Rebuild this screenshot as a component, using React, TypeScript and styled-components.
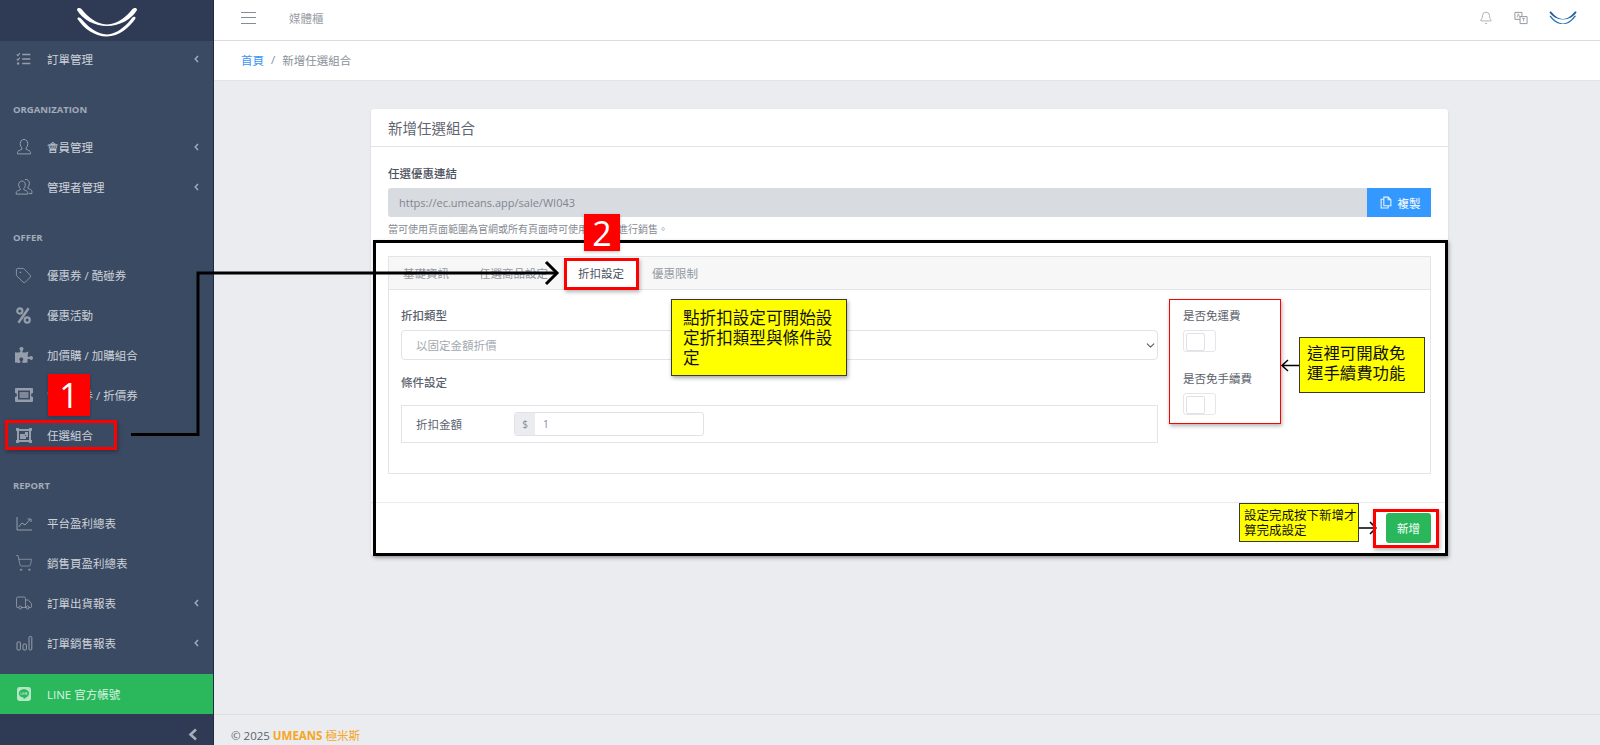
import React from "react";
import styled, { createGlobalStyle } from "styled-components";
import { ChevronDown, Bell, ShoppingCart, Truck, Tag } from "lucide-react";
import { FaPuzzlePiece, FaLine } from "react-icons/fa";

const FONT = `"Open Sans", "Noto Sans CJK TC", sans-serif`;

const Global = createGlobalStyle`
  * { box-sizing: border-box; }
  html, body { margin: 0; padding: 0; height: 745px; overflow: hidden; background: #ebecef; }
  body { font-family: ${FONT}; font-size: 11.5px; color: #4e5561; }
`;

const Page = styled.div`
  position: relative;
  display: flex;
  width: 1600px;
  height: 745px;
  overflow: hidden;
`;

const Sidebar = styled.aside`
  width: 214px;
  flex: none;
  display: flex;
  flex-direction: column;
  background: #3a4a63;
  border-right: 1px solid #1f2a44;
`;

const LogoBar = styled.div`
  height: 41px;
  flex: none;
  display: flex;
  justify-content: center;
  padding-top: 3px;
  background: #2f3a54;
`;

const Nav = styled.nav`
  flex: 1;
  display: flex;
  flex-direction: column;
`;

const SectionTitle = styled.div`
  height: 48px;
  padding: 23px 0 0 13px;
  font-size: 9.5px;
  line-height: 12px;
  font-weight: 700;
  color: #a3abb8;
`;

const NavRow = styled.div`
  height: 40px;
  flex: none;
  display: flex;
  align-items: center;
  padding-bottom: 4px;
  color: #ced2d9;
`;

const NavIcon = styled.span`
  width: 47px;
  flex: none;
  display: flex;
  justify-content: center;
  color: #969eab;
  svg { display: block; }
`;

const NavText = styled.span`
  flex: 1;
  white-space: nowrap;
`;

const Caret = styled.span`
  width: 19px;
  flex: none;
  display: flex;
  svg { display: block; }
`;

const LineRow = styled(NavRow)`
  background: #2bb85c;
  color: #d9f3e2;
  padding-bottom: 0;
`;

const LineIcon = styled(NavIcon)`
  color: #b4e8c5;
`;

const Collapse = styled.div`
  height: 31px;
  flex: none;
  background: #2f3a54;
  display: flex;
  align-items: center;
  justify-content: flex-end;
  padding: 10px 15px 0 0;
  color: #a8aeb9;
`;

const Main = styled.main`
  flex: 1;
  min-width: 0;
  display: flex;
  flex-direction: column;
`;

const TopBar = styled.header`
  height: 41px;
  flex: none;
  background: #fff;
  border-bottom: 1px solid #d8dbe0;
  display: flex;
  align-items: center;
  padding: 0 23px 5px 27px;
`;

const Burger = styled.span`
  width: 15px;
  height: 12px;
  flex: none;
  border-top: 1px solid #868c96;
  border-bottom: 1px solid #868c96;
  position: relative;
  &::after {
    content: "";
    position: absolute;
    left: 0;
    right: 0;
    top: 4px;
    height: 1px;
    background: #868c96;
  }
`;

const TopTitle = styled.span`
  margin-left: 33px;
  color: #9a9ea6;
  flex: 1;
`;

const TopIcons = styled.div`
  display: flex;
  align-items: center;
  gap: 21px;
  color: #8d929b;
  svg { display: block; }
`;

const Crumbs = styled.div`
  height: 40px;
  flex: none;
  background: #fff;
  border-bottom: 1px solid #e2e4e8;
  display: flex;
  align-items: center;
  padding: 0 0 2px 27px;
  color: #8c9199;
  gap: 7px;
`;

const CrumbLink = styled.a`
  color: #3a94f5;
`;

const Content = styled.div`
  flex: 1;
  min-height: 0;
  padding: 28px 152px 0 157px;
`;

const Card = styled.section`
  background: #fff;
  border-radius: 3px;
  box-shadow: 0 1px 2px rgba(60, 70, 90, 0.15);
  height: 447px;
  display: flex;
  flex-direction: column;
`;

const CardHead = styled.div`
  height: 38px;
  flex: none;
  border-bottom: 1px solid #e2e4e8;
  display: flex;
  align-items: center;
  padding-left: 17px;
  font-size: 14.5px;
  color: #5f6570;
`;

const CardBody = styled.div`
  flex: 1;
  padding: 19px 17px 0;
  border-bottom: 1px solid #e9ebee;
`;

const FieldLabel = styled.div`
  font-weight: 500;
  line-height: 16px;
  color: #4c525e;
`;

const LinkRow = styled.div`
  display: flex;
  height: 29px;
  margin-top: 6px;
`;

const LinkInput = styled.div`
  flex: 1;
  background: #d8dbe0;
  border-radius: 3px 0 0 3px;
  color: #80868f;
  font-size: 11px;
  padding-left: 11px;
  display: flex;
  align-items: center;
`;

const CopyButton = styled.div`
  width: 64px;
  flex: none;
  background: #3399ff;
  color: #e9f3ff;
  display: flex;
  align-items: center;
  justify-content: center;
  gap: 6px;
  padding-left: 2px;
  font-weight: 500;
  svg { display: block; }
`;

const Hint = styled.div`
  margin-top: 4px;
  font-size: 10px;
  line-height: 16px;
  color: #868b93;
`;

const Tabs = styled.div`
  margin-top: 19px;
  height: 218px;
  border: 1px solid #e2e4e8;
`;

const TabBar = styled.div`
  height: 33px;
  background: #f7f7f8;
  border-bottom: 1px solid #e2e4e8;
  display: flex;
  gap: 2px;
`;

const Tab = styled.div<{ $active?: boolean }>`
  padding: 0 14px;
  display: flex;
  align-items: center;
  white-space: nowrap;
  color: ${(p) => (p.$active ? "#4c525e" : "#9499a1")};
  background: ${(p) => (p.$active ? "#fff" : "transparent")};
  &:last-child { margin-left: -2px; }
`;

const Pane = styled.div`
  display: grid;
  grid-template-columns: 757px 1fr;
  column-gap: 25px;
  padding: 18px 12px 0;
`;

const PaneLabel = styled.div`
  font-weight: 500;
  line-height: 16px;
  color: #5c626d;
`;

const SelectBox = styled.div`
  height: 30px;
  margin-top: 6px;
  border: 1px solid #e0e3e8;
  border-radius: 4px;
  display: flex;
  align-items: center;
  justify-content: space-between;
  padding: 0 0 0 14px;
  color: #a4a9b0;
  svg { display: block; color: #555d6b; }
`;

const CondLabel = styled(PaneLabel)`
  margin-top: 15px;
`;

const CondBox = styled.div`
  height: 38px;
  margin-top: 14px;
  border: 1px solid #e2e4e8;
  display: flex;
  align-items: center;
  padding-left: 14px;
  color: #5c626d;
`;

const CondName = styled.span`
  width: 98px;
  flex: none;
`;

const InputGroup = styled.div`
  width: 190px;
  height: 24px;
  display: flex;
  border: 1px solid #dfe2e7;
  border-radius: 3px;
  overflow: hidden;
`;

const Addon = styled.span`
  width: 20px;
  flex: none;
  background: #ebecef;
  color: #868b93;
  display: flex;
  align-items: center;
  justify-content: center;
  font-size: 10px;
`;

const InputValue = styled.span`
  padding-left: 8px;
  display: flex;
  align-items: center;
  color: #7b8ba3;
  font-size: 10px;
`;

const SwitchCol = styled.div`
  display: flex;
  flex-direction: column;
`;

const SwitchLabel = styled(PaneLabel)`
  font-weight: 400;
`;

const Switch = styled.div`
  width: 33px;
  height: 22px;
  margin: 6px 0 19px;
  padding: 2px;
  border: 1px solid #e4e6ea;
  border-radius: 3px;
  background: #fff;
  &::before {
    content: "";
    display: block;
    width: 17px;
    height: 16px;
    border: 1px solid #dfe2e7;
    border-radius: 2px;
  }
`;

const CardFoot = styled.div`
  height: 53px;
  flex: none;
  display: flex;
  justify-content: flex-end;
  padding: 10px 17px 0 0;
`;

const SaveButton = styled.div`
  width: 45px;
  height: 30px;
  background: #2ab75b;
  border-radius: 3px;
  color: #dff5e6;
  font-weight: 500;
  display: flex;
  align-items: center;
  justify-content: center;
`;

const Footer = styled.footer`
  flex: none;
  height: 31px;
  border-top: 1px solid #dddfe3;
  padding: 13px 0 0 17px;
  line-height: 16px;
  color: #5d636d;
  font-size: 11.5px;
`;

const Brand = styled.b`
  color: #f5a623;
  font-weight: 700;
`;

const BrandCn = styled.span`
  color: #f5a623;
`;

/* annotation layer: items placed on the screenshot as markup */
const Overlay = styled.svg`
  position: absolute;
  left: 0;
  top: 0;
  width: 1600px;
  height: 745px;
  pointer-events: none;
`;

const Frame = styled.div<{ $x: number; $y: number; $w: number; $h: number; $b: number; $c: string }>`
  position: absolute;
  left: ${(p) => p.$x}px;
  top: ${(p) => p.$y}px;
  width: ${(p) => p.$w}px;
  height: ${(p) => p.$h}px;
  border: ${(p) => p.$b}px solid ${(p) => p.$c};
  box-shadow: 1px 2px 4px rgba(0, 0, 0, 0.3);
`;

const Badge = styled.div<{ $x: number; $y: number; $w: number; $h: number }>`
  position: absolute;
  left: ${(p) => p.$x}px;
  top: ${(p) => p.$y}px;
  width: ${(p) => p.$w}px;
  height: ${(p) => p.$h}px;
  background: #f00;
  color: #fff;
  font-family: "Open Sans", "Liberation Sans", sans-serif;
  font-size: 34px;
  display: flex;
  align-items: center;
  justify-content: center;
  box-shadow: 0 1px 3px rgba(0, 0, 0, 0.25);
`;

const Note = styled.div<{ $x: number; $y: number; $w: number; $h: number; $size: number; $lh: number; $pad: string; $b: number; $shadow?: boolean }>`
  position: absolute;
  left: ${(p) => p.$x}px;
  top: ${(p) => p.$y}px;
  width: ${(p) => p.$w}px;
  height: ${(p) => p.$h}px;
  padding: ${(p) => p.$pad};
  background: #ffff00;
  border: ${(p) => p.$b}px solid #3a3a2a;
  color: #111;
  font-size: ${(p) => p.$size}px;
  line-height: ${(p) => p.$lh}px;
  box-shadow: ${(p) => (p.$shadow ? "1px 2px 4px rgba(0,0,0,0.35)" : "none")};
`;

const Chev = () => (
  <svg width="5" height="8" viewBox="0 0 5 8" fill="none" stroke="#a6adb9" strokeWidth="1.4">
    <path d="M4 1 1.2 4 4 7" />
  </svg>
);

const Line = ({ children, w = 20 }: { children: React.ReactNode; w?: number }) => (
  <svg width={w} height="20" viewBox="0 0 20 20" fill="none" stroke="currentColor" strokeWidth="1">
    {children}
  </svg>
);

const Logo = ({ w, color, color2 }: { w: number; color: string; color2: string }) => (
  <svg width={w} viewBox="0 0 62 30">
    <path d="M1 3C1 .5 4 .5 5.5 2 12 10 20 17 31 17.5 42 17 50 10 56.5 2 58 .5 61 .5 61 3 56 12 44 19 31 19 18 19 6 12 1 3Z" fill={color} />
    <path d="M1.5 12C1 10 3.5 10 5 11.5 12 20 21 27 31 27.5 41 27 50 19 56 11 57.5 9 60 9.5 59.5 11.5 53 21 43 29.5 31 29.5 19 29.5 8 22 1.5 12Z" fill={color2} />
  </svg>
);

const items: Array<{ title?: string; rows: Array<{ t: string; c?: boolean; i: React.ReactNode }> }> = [
  {
    rows: [
      {
        t: "訂單管理",
        c: true,
        i: (
          <Line w={18}>
            <path d="M8 5h9M8 10h9M8 15h9" strokeWidth="1.6" />
            <path d="M2 5l1.2 1.2L5.4 3.6M2 10l1.2 1.2 2.2-2.6" strokeWidth="1.3" />
            <circle cx="3.4" cy="15" r="1.3" fill="currentColor" stroke="none" />
          </Line>
        ),
      },
    ],
  },
  {
    title: "ORGANIZATION",
    rows: [
      {
        t: "會員管理",
        c: true,
        i: (
          <Line>
            <path d="M10 2.5c-2.4 0-3.8 1.8-3.8 4.2 0 1.7.7 3.3 1.7 4.2v1.4c-2 .8-4.4 1.6-4.4 3.2v1.4h13v-1.4c0-1.6-2.4-2.4-4.4-3.2v-1.4c1-.9 1.7-2.5 1.7-4.2 0-2.4-1.4-4.2-3.8-4.2z" />
          </Line>
        ),
      },
      {
        t: "管理者管理",
        c: true,
        i: (
          <Line>
            <path d="M8 4c-2 0-3.3 1.6-3.3 3.8 0 1.5.6 2.9 1.5 3.7v1.3c-1.8.7-4 1.4-4 2.9v1.4h11.6v-1.4c0-1.5-2.2-2.2-4-2.9v-1.3c.9-.8 1.5-2.2 1.5-3.7C11.3 5.6 10 4 8 4z" />
            <path d="M11 2.6c2.4-.6 4.4 1 4.4 3.8 0 1.5-.6 2.9-1.5 3.7v1.3c1.8.7 4 1.4 4 2.9v2.3h-3" />
          </Line>
        ),
      },
    ],
  },
  {
    title: "OFFER",
    rows: [
      { t: "優惠券 / 酷碰券", i: <Tag size={17} strokeWidth={1.2} /> },
      {
        t: "優惠活動",
        i: (
          <svg width="15" height="17" viewBox="0 0 15 17" fill="none" stroke="currentColor" strokeWidth="2.1">
            <circle cx="3.8" cy="4" r="2.6" />
            <circle cx="11.2" cy="13" r="2.6" />
            <path d="M12.6 1.2 2.4 15.8" strokeWidth="2.4" />
          </svg>
        ),
      },
      { t: "加價購 / 加購組合", i: <FaPuzzlePiece size={18} /> },
      {
        t: "電子禮券 / 折價券",
        i: (
          <svg width="18" height="14" viewBox="0 0 18 14" fill="currentColor">
            <path fillRule="evenodd" d="M1 0h16a1 1 0 0 1 1 1v4a2 2 0 0 0 0 4v4a1 1 0 0 1-1 1H1a1 1 0 0 1-1-1V9a2 2 0 0 0 0-4V1a1 1 0 0 1 1-1zm2 2.5v9h12v-9z" />
            <path d="M4.5 4h9v6h-9z" opacity=".75" />
          </svg>
        ),
      },
      {
        t: "任選組合",
        i: (
          <svg width="16" height="15" viewBox="0 0 16 15" fill="currentColor">
            <path fillRule="evenodd" d="M0 0h3v1h10V0h3v3h-1v9h1v3h-3v-1H3v1H0v-3h1V3H0zm3 3v9h10V3z" />
            <path fillRule="evenodd" d="M4 6h5V4h3v5h-2v2H4zm5 1v1h1V7z" />
          </svg>
        ),
      },
    ],
  },
  {
    title: "REPORT",
    rows: [
      {
        t: "平台盈利總表",
        i: (
          <Line>
            <path d="M3 4v13h15" />
            <path d="M4.5 14l3.5-4 3 2 5-5.5M13.5 6H17v3" />
          </Line>
        ),
      },
      { t: "銷售頁盈利總表", i: <ShoppingCart size={18} strokeWidth={1} /> },
      { t: "訂單出貨報表", c: true, i: <Truck size={18} strokeWidth={1.1} /> },
      {
        t: "訂單銷售報表",
        c: true,
        i: (
          <Line>
            <rect x="3" y="9" width="3.4" height="8" rx="1" />
            <rect x="9" y="11" width="3.4" height="6" rx="1" />
            <rect x="15" y="3.5" width="2.8" height="13.5" rx="1" />
          </Line>
        ),
      },
    ],
  },
];

export default function App() {
  return (
    <Page>
      <Global />
      <Sidebar>
        <LogoBar>
          <Logo w={62} color="#fff" color2="#fff" />
        </LogoBar>
        <Nav>
          {items.map((s, i) => (
            <React.Fragment key={i}>
              {s.title && <SectionTitle>{s.title}</SectionTitle>}
              {s.rows.map((r) => (
                <NavRow key={r.t}>
                  <NavIcon>{r.i}</NavIcon>
                  <NavText>{r.t}</NavText>
                  {r.c && (
                    <Caret>
                      <Chev />
                    </Caret>
                  )}
                </NavRow>
              ))}
            </React.Fragment>
          ))}
        </Nav>
        <LineRow>
          <LineIcon>
            <FaLine size={16} />
          </LineIcon>
          <NavText>LINE 官方帳號</NavText>
        </LineRow>
        <Collapse>
          <svg width="10" height="13" viewBox="0 0 10 13" fill="none" stroke="currentColor" strokeWidth="2.6">
            <path d="M8 1.5 2.5 6.5 8 11.5" />
          </svg>
        </Collapse>
      </Sidebar>
      <Main>
        <TopBar>
          <Burger />
          <TopTitle>媒體櫃</TopTitle>
          <TopIcons>
            <Bell size={14} strokeWidth={1.2} />
            <svg width="14" height="14" viewBox="0 0 15 15" fill="none" stroke="currentColor" strokeWidth="1">
              <path d="M1 1.5h7.5V9H1z" />
              <path d="M6.5 6H14v7.5H6.5z" fill="#fff" />
              <path d="M3.2 7l1.5-4 1.5 4M8.7 8h3M10.2 8v3" strokeWidth=".8" />
            </svg>
            <Logo w={28} color="#1d5f9e" color2="#2f74b2" />
          </TopIcons>
        </TopBar>
        <Crumbs>
          <CrumbLink>首頁</CrumbLink>
          <span>/</span>
          <span>新增任選組合</span>
        </Crumbs>
        <Content>
          <Card>
            <CardHead>新增任選組合</CardHead>
            <CardBody>
              <FieldLabel>任選優惠連結</FieldLabel>
              <LinkRow>
                <LinkInput>https://ec.umeans.app/sale/WI043</LinkInput>
                <CopyButton>
                  <svg width="12" height="13" viewBox="0 0 11 12" fill="none" stroke="currentColor" strokeWidth="1">
                    <path d="M3.5 1H7.5L10 3.5V9H3.5z" />
                    <path d="M7.5 1v2.5H10" />
                    <path d="M3.5 3H1v8h6.5V9" />
                  </svg>
                  複製
                </CopyButton>
              </LinkRow>
              <Hint>當可使用頁面範圍為官網或所有頁面時可使用此連結進行銷售。</Hint>
              <Tabs>
                <TabBar>
                  <Tab>基礎資訊</Tab>
                  <Tab>任選商品設定</Tab>
                  <Tab $active>折扣設定</Tab>
                  <Tab>優惠限制</Tab>
                </TabBar>
                <Pane>
                  <div>
                    <PaneLabel>折扣類型</PaneLabel>
                    <SelectBox>
                      以固定金額折價
                      <ChevronDown size={13} strokeWidth={2} />
                    </SelectBox>
                    <CondLabel>條件設定</CondLabel>
                    <CondBox>
                      <CondName>折扣金額</CondName>
                      <InputGroup>
                        <Addon>$</Addon>
                        <InputValue>1</InputValue>
                      </InputGroup>
                    </CondBox>
                  </div>
                  <SwitchCol>
                    <SwitchLabel>是否免運費</SwitchLabel>
                    <Switch />
                    <SwitchLabel>是否免手續費</SwitchLabel>
                    <Switch />
                  </SwitchCol>
                </Pane>
              </Tabs>
            </CardBody>
            <CardFoot>
              <SaveButton>新增</SaveButton>
            </CardFoot>
          </Card>
        </Content>
        <Footer>
          © 2025 <Brand>UMEANS</Brand> <BrandCn>極米斯</BrandCn>
        </Footer>
      </Main>

      <Frame $x={373} $y={240} $w={1075} $h={316} $b={3.5} $c="#000" />
      <Overlay viewBox="0 0 1600 745" fill="none" stroke="#000">
        <path d="M131 434.5H198V273H556" strokeWidth="3" />
        <path d="M546 262l11 11-11 11" strokeWidth="3" />
        <path d="M1299 365.5H1282M1288 360l-6 5.5 6 5.5" strokeWidth="1.5" />
        <path d="M1359 528H1376M1370 522l6 6-6 6" strokeWidth="1.5" />
      </Overlay>
      <Badge $x={48} $y={374} $w={42} $h={42}>1</Badge>
      <Frame $x={5} $y={420} $w={112} $h={30} $b={3} $c="#f00" />
      <Badge $x={584} $y={214} $w={36} $h={37}>2</Badge>
      <Frame $x={564} $y={258} $w={75} $h={32} $b={3} $c="#f00" />
      <Note $x={671} $y={299} $w={176} $h={77} $size={16.6} $lh={20} $pad="8px 10px 8px 11px" $b={1.5} $shadow>
        點折扣設定可開始設定折扣類型與條件設定
      </Note>
      <Frame $x={1169} $y={299} $w={112} $h={125} $b={1.5} $c="#f00" />
      <Note $x={1299} $y={337} $w={126} $h={56} $size={16.4} $lh={20} $pad="5px 7px" $b={1.5}>
        這裡可開啟免運手續費功能
      </Note>
      <Note $x={1239} $y={503} $w={120} $h={39} $size={12.5} $lh={15} $pad="4px 0 3px 4px" $b={1}>
        設定完成按下新增才算完成設定
      </Note>
      <Frame $x={1373} $y={509} $w={66} $h={39} $b={3.5} $c="#f00" />
    </Page>
  );
}
